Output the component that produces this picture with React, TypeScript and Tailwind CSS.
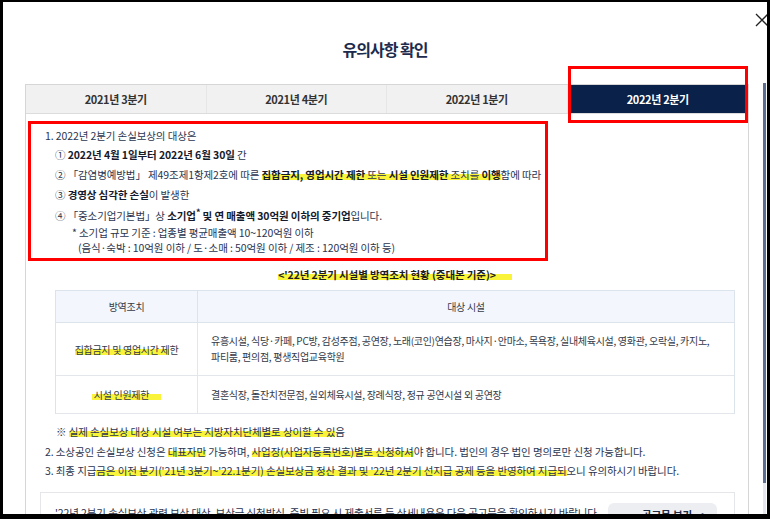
import React from 'react';

const HL = 'bg-[image:linear-gradient(transparent_48%,#f9f43a_48%,#f9f43a_88%,transparent_88%)]';

const Hl: React.FC<{ children: React.ReactNode }> = ({ children }) => (
  <span className={HL}>{children}</span>
);

const B: React.FC<{ children: React.ReactNode }> = ({ children }) => (
  <b className="font-bold text-[#151a2c]">{children}</b>
);

const tabs = ['2021년 3분기', '2021년 4분기', '2022년 1분기', '2022년 2분기'];

export default function App() {
  return (
    <div className="relative w-[770px] h-[519px] bg-black pl-[3px] pt-[2px] pr-[3px] pb-[5px] font-['Noto_Sans_CJK_KR',sans-serif] tracking-[-0.1px]">
      <div className="h-full bg-white overflow-hidden">
        <h2 className="pt-[37px] h-[57px] leading-[20px] text-center text-[16px] font-bold tracking-[-1px] text-[#1d2b4d]">
          유의사항 확인
        </h2>

        <div className="mt-[25px] ml-[22px] w-[724px] h-[440px] border-x border-t border-[#d6d6d6]">
          {/* tabs */}
          <div className="grid grid-cols-4 h-[29px] bg-[#f1f1f1] border-b border-[#dcdcdc]">
            {tabs.map((t, i) =>
              i === 3 ? (
                <div key={t} className="flex items-center justify-center bg-[#0a2249] text-white text-[11px] font-bold tracking-[-0.35px]">
                  {t}
                </div>
              ) : (
                <div key={t} className="flex items-center justify-center border-r border-[#e6e6e6] text-[#333] text-[11px] font-semibold tracking-[-0.35px]">
                  {t}
                </div>
              )
            )}
          </div>

          <div className="pl-[14px] pr-[13px] pt-[12px] text-[10.5px] text-[#2b3550]">
            <p className="pl-[5px] h-[19px] leading-[19px]">1. 2022년 2분기 손실보상의 대상은</p>
            <p className="pl-[15px] h-[20px] leading-[20px]">
              ① <B>2022년 4월 1일부터 2022년 6월 30일</B> 간
            </p>
            <p className="pl-[15px] h-[20px] leading-[20px] whitespace-nowrap">
              ② 「감염병예방법」 제49조제1항제2호에 따른{' '}
              <Hl>
                <B>집합금지, 영업시간 제한</B> 또는 <B>시설 인원제한</B> 조치를 <B>이행</B>
              </Hl>
              함에 따라
            </p>
            <p className="pl-[15px] h-[20px] leading-[20px]">
              ③ <B>경영상 심각한 손실</B>이 발생한
            </p>
            <p className="pl-[15px] mt-px h-[20px] leading-[20px] whitespace-nowrap">
              ④ 「중소기업기본법」상 <B>소기업</B>
              <sup className="text-[9px] font-bold text-[#151a2c]">*</sup> <B>및 연 매출액 30억원 이하의 중기업</B>입니다.
            </p>
            <p className="pl-[32px] h-[14px] leading-[14px]">* 소기업 규모 기준 : 업종별 평균매출액 10~120억원 이하</p>
            <p className="pl-[38px] h-[16px] leading-[16px]">
              (음식·숙박 : 10억원 이하 / 도·소매 : 50억원 이하 / 제조 : 120억원 이하 등)
            </p>

            <div className="ml-[15px]">
              <p className="mt-[9px] h-[20px] leading-[20px] text-center font-bold text-[#1e1e1e]">
                <span className={HL + ' pr-[16px]'}>&lt;'22년 2분기 시설별 방역조치 현황 (중대본 기준)&gt;</span>
              </p>

              <div className="mt-[5px] border-t border-x border-[#dde3ea] text-[10px] tracking-[-0.3px] text-[#333a48]">
                <div className="flex h-[32px] bg-[#f3f7fd] border-b border-[#dde3ea]">
                  <div className="w-[142px] flex items-center justify-center border-r border-[#dde3ea]">방역조치</div>
                  <div className="flex-1 flex items-center justify-center">대상 시설</div>
                </div>
                <div className="flex h-[53px] border-b border-[#e3e7ec]">
                  <div className="w-[142px] flex items-center justify-center border-r border-[#e3e7ec]">
                    <span>
                      <span className={HL}>집합금지 및 영업시간 제</span>한
                    </span>
                  </div>
                  <div className="flex-1 flex flex-col justify-center pl-[13px] leading-[16px]">
                    <span className="whitespace-nowrap">
                      유흥시설, 식당·카페, PC방, 감성주점, 공연장, 노래(코인)연습장, 마사지·안마소, 목욕장, 실내체육시설, 영화관, 오락실, 카지노,
                    </span>
                    <span>파티룸, 편의점, 평생직업교육학원</span>
                  </div>
                </div>
                <div className="flex h-[38px] border-b border-[#e3e7ec]">
                  <div className="w-[142px] flex items-center justify-center border-r border-[#e3e7ec]">
                    <span className={HL + ' pl-[2px] pr-[12px]'}>시설 인원제한</span>
                  </div>
                  <div className="flex-1 flex items-center pl-[13px]">
                    결혼식장, 돌잔치전문점, 실외체육시설, 장례식장, 정규 공연시설 외 공연장
                  </div>
                </div>
              </div>
            </div>

            <p className="mt-[8px] pl-[16px] h-[20px] leading-[20px]">
              ※ <Hl>실제 손실보상 대상 시설 여부는 지방자치단체별로 상이할 수 있</Hl>음
            </p>
            <p className="pl-[5px] h-[19px] leading-[19px] whitespace-nowrap">
              2. 소상공인 손실보상 신청은 <Hl>대표자만</Hl> 가능하며, <Hl>사업장(사업자등록번호)별로 신청하셔</Hl>야 합니다. 법인의 경우 법인 명의로만 신청 가능합니다.
            </p>
            <p className="pl-[5px] h-[19px] leading-[19px] whitespace-nowrap">
              3. 최종 지급
              <Hl>금은 이전 분기('21년 3분기~'22.1분기) 손실보상금 정산 결과 및 '22년 2분기 선지급 공제 등을 반영하여 지급되</Hl>
              오니 유의하시기 바랍니다.
            </p>

            <div className="mt-[12px] h-[60px] border-x border-t border-[#e4e6ea] pt-[10px] pl-[14px] pr-[17px] flex justify-between items-start">
              <span className="leading-[20px] whitespace-nowrap">
                '22년 2분기 손실보상 관련 보상 대상, 보상금 신청방식, 증빙 필요 시 제출서류 등 상세내용은 다음 공고문을 확인하시기 바랍니다
              </span>
              <span className="w-[109px] h-[30px] rounded-[6px] bg-[#eceef2] flex justify-between pt-[2px] pl-[34px] pr-[10px] leading-[20px] font-bold text-[#1e2a44]">
                <span>공고문 보기</span>
                <span className="font-normal">&gt;</span>
              </span>
            </div>
          </div>
        </div>
      </div>

      {/* close */}
      <svg className="absolute left-[755px] top-[13px]" width="12" height="14" viewBox="0 0 12 14">
        <path d="M1 1 L13 13 M13 1 L1 13" stroke="#222" strokeWidth="1.3" fill="none" />
      </svg>

      {/* scrollbar */}
      <div className="absolute left-[763px] top-[83px] w-[3px] h-[400px] bg-[#5b6d91]" />
      <div className="absolute left-[763px] top-[483px] w-[3px] h-[31px] bg-[#e3e6ec]" />

      {/* red marks */}
      <div className="absolute left-[568px] top-[66px] w-[180px] h-[57px] border-[3px] border-[#ff0000]" />
      <div className="absolute left-[28px] top-[121px] w-[520px] h-[140px] border-[3px] border-[#ff0000]" />
    </div>
  );
}
